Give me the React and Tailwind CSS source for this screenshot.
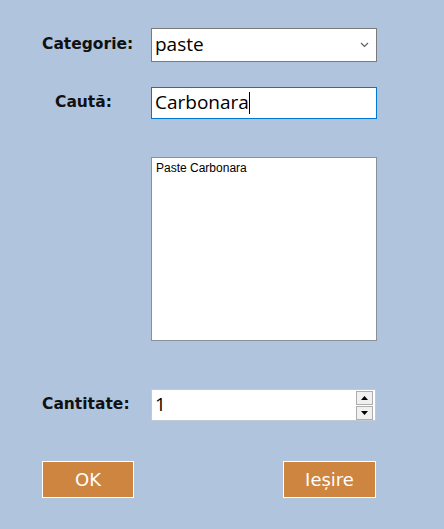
import React from 'react';

function App() {
  return (
    <div className="w-[444px] h-[529px] bg-[#b0c4de] pl-[42px] pt-[28px] font-['Open_Sans','Noto_Sans',sans-serif]">
      {/* categorie */}
      <div className="flex items-center h-[34px]">
        <div className="w-[109px] text-[15.5px] font-bold text-[#111] font-['DejaVu_Sans',sans-serif]">Categorie:</div>
        <div className="w-[226px] h-[34px] bg-white border border-[#7a7a7a] flex items-center justify-between pl-[3px] pr-[7px]">
          <span className="text-[19px] text-black leading-none pb-[2px]">paste</span>
          <svg width="9" height="6" viewBox="0 0 9 6">
            <path d="M1 1 L4.5 4.5 L8 1" stroke="#606060" strokeWidth="1.2" fill="none" />
          </svg>
        </div>
      </div>

      {/* cauta */}
      <div className="flex items-center h-[32px] mt-[25px]">
        <div className="w-[109px] pl-[13px] text-[15.5px] font-bold text-[#111] font-['DejaVu_Sans',sans-serif]">Caută:</div>
        <div className="w-[226px] h-[32px] bg-white border border-[#0078d7] flex items-center pl-[3px]">
          <span className="text-[19px] text-black leading-none pb-[2px]">Carbonara</span>
          <span className="w-px h-[22px] bg-black"></span>
        </div>
      </div>

      {/* lista */}
      <div className="ml-[109px] mt-[38px] w-[226px] h-[184px] bg-white border border-[#8a8f99] pl-[4px] pt-px">
        <div className="text-[12px] text-black font-['Liberation_Sans',sans-serif]">Paste Carbonara</div>
      </div>

      {/* cantitate */}
      <div className="flex items-center h-[32px] mt-[48px]">
        <div className="w-[109px] text-[15.5px] font-bold text-[#111] font-['DejaVu_Sans',sans-serif]">Cantitate:</div>
        <div className="w-[225px] h-[32px] bg-white border border-[#c4c8cf] flex items-center justify-between pl-[3px] pr-[2px]">
          <span className="text-[19px] text-black leading-none pb-[2px]">1</span>
          <div className="flex flex-col gap-px">
            <div className="w-[17px] h-[14px] bg-[#f0f0f0] border border-[#adadad] flex items-center justify-center">
              <svg width="7" height="4" viewBox="0 0 7 4"><path d="M3.5 0 L7 4 L0 4 Z" fill="#000" /></svg>
            </div>
            <div className="w-[17px] h-[14px] bg-[#f0f0f0] border border-[#adadad] flex items-center justify-center">
              <svg width="7" height="4" viewBox="0 0 7 4"><path d="M0 0 L7 0 L3.5 4 Z" fill="#000" /></svg>
            </div>
          </div>
        </div>
      </div>

      {/* butoane */}
      <div className="flex justify-between w-[334px] mt-[40px]">
        <button className="w-[92px] h-[37px] bg-[#cd853f] border border-white text-white text-[18px] font-['DejaVu_Sans',sans-serif]">OK</button>
        <button className="w-[93px] h-[37px] bg-[#cd853f] border border-white text-white text-[18px] font-['DejaVu_Sans',sans-serif]">Ieșire</button>
      </div>
    </div>
  );
}

export default App;
